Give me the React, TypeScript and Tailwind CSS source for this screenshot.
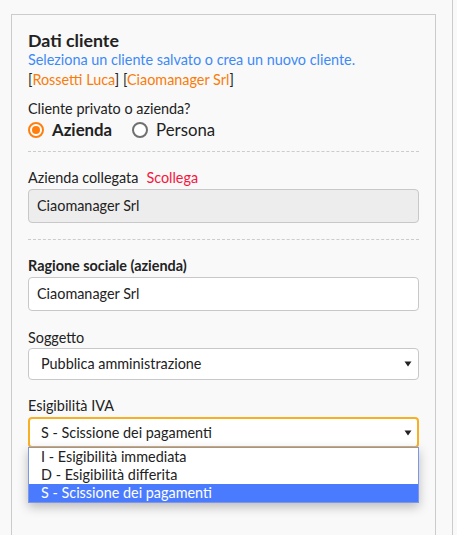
import React from "react";

const font = { fontFamily: "Lato, 'Noto Sans', sans-serif" };

function Radio({ checked }: { checked?: boolean }) {
  return checked ? (
    <span className="inline-flex shrink-0 w-4 h-4 rounded-full border-2 border-[#ff7f0e] items-center justify-center bg-white">
      <span className="w-2 h-2 rounded-full bg-[#ff7f0e]" />
    </span>
  ) : (
    <span className="inline-block shrink-0 w-4 h-4 rounded-full border-2 border-[#707070] bg-white" />
  );
}

function Caret() {
  return (
    <svg width="8" height="6" viewBox="0 0 8 6" className="shrink-0">
      <path d="M0.5 0.5h7L4 5.5z" fill="#222" />
    </svg>
  );
}

export default function App() {
  return (
    <div
      className="h-[535px] w-[457px] bg-[#f9f9f9] flex overflow-hidden text-[#222] text-[14.4px]"
      style={font}
    >
      {/* Card */}
      <div className="ml-[11px] mt-[14px] w-[425px] shrink-0 border border-[#ccc] border-b-0 px-4 pt-[15px]">
        <h2 className="text-[17.8px] leading-[20px] font-bold">Dati cliente</h2>
        <p className="leading-[20px] text-[#3d8af7]">
          Seleziona un cliente salvato o crea un nuovo cliente.
        </p>
        <p className="leading-[20px]">
          [<span className="text-[#f97c0a]">Rossetti Luca</span>] [
          <span className="text-[#f97c0a]">Ciaomanager Srl</span>]
        </p>

        <p className="mt-[9px] leading-[20px]">Cliente privato o azienda?</p>
        <div className="flex items-center h-[21px] text-[16.8px]">
          <Radio checked />
          <span className="ml-2 font-bold">Azienda</span>
          <span className="ml-5 flex">
            <Radio />
          </span>
          <span className="ml-2">Persona</span>
        </div>

        <div className="mt-[11px] border-t border-dashed border-[#ccc]" />

        <div className="mt-[16px] leading-[20px] flex gap-2">
          <span>Azienda collegata</span>
          <span className="text-[#f5163f]">Scollega</span>
        </div>
        <div className="mt-[1px] h-[34px] rounded border border-[#c8c8c8] bg-[#ededed] flex items-center px-2">
          Ciaomanager Srl
        </div>

        <div className="mt-[16px] border-t border-dashed border-[#ccc]" />

        <p className="mt-[16px] leading-[20px] font-bold">Ragione sociale (azienda)</p>
        <div className="mt-[1px] h-[34px] rounded border border-[#c8c8c8] bg-white flex items-center px-2">
          Ciaomanager Srl
        </div>

        <p className="mt-[17px] leading-[20px]">Soggetto</p>
        <div className="h-[32px] rounded border border-[#c8c8c8] bg-white flex items-center pl-3 pr-[6px]">
          <span className="flex-1">Pubblica amministrazione</span>
          <Caret />
        </div>

        <p className="mt-[16px] leading-[20px]">Esigibilità IVA</p>
        <div className="relative mt-[1px]">
          <div className="h-[31px] rounded border-2 border-[#f7b024] bg-white flex items-center pl-[11px] pr-[5px]">
            <span className="flex-1">S - Scissione dei pagamenti</span>
            <Caret />
          </div>

          {/* Open option list */}
          <div className="absolute left-0 right-0 top-[30px] z-10 bg-white border border-[#7d96e8] shadow-[0_4px_10px_rgba(0,0,0,0.25)] leading-[18px]">
            <div className="pl-3">I - Esigibilità immediata</div>
            <div className="pl-3">D - Esigibilità differita</div>
            <div className="pl-3 bg-[#4a7bff] text-white">S - Scissione dei pagamenti</div>
          </div>

          <div className="mt-[20px] h-[34px] rounded border border-[#c8c8c8] bg-white" />
        </div>
      </div>

      <div className="ml-[16px] w-px bg-[#ccc] shrink-0" />
    </div>
  );
}
